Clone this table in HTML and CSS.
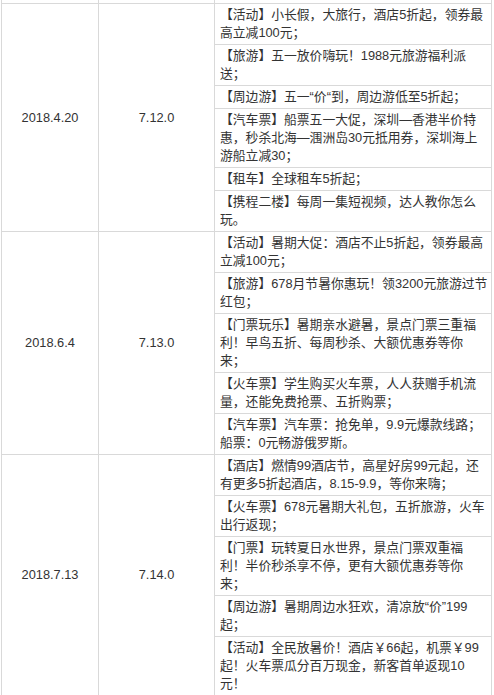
FILE: index.html
```html
<!DOCTYPE html>
<html lang="zh-CN">
<head>
<meta charset="utf-8">
<title>活动列表</title>
<link rel="stylesheet" href="styles.css">
</head>
<body>
<div class="table">
  <div class="group spacer">
    <div class="cell"></div>
    <div class="cell"></div>
    <div class="items"></div>
  </div>

  <div class="group">
    <div class="cell">2018.4.20</div>
    <div class="cell">7.12.0</div>
    <div class="items">
      <div class="item">【活动】小长假，大旅行，酒店5折起，领券最高立减100元；</div>
      <div class="item">【旅游】五一放价嗨玩！1988元旅游福利派送；</div>
      <div class="item">【周边游】五一“价“到，周边游低至5折起；</div>
      <div class="item">【汽车票】船票五一大促，深圳—香港半价特惠，秒杀北海—涠洲岛30元抵用券，深圳海上游船立减30；</div>
      <div class="item">【租车】全球租车5折起；</div>
      <div class="item">【携程二楼】每周一集短视频，达人教你怎么玩。</div>
    </div>
  </div>

  <div class="group">
    <div class="cell">2018.6.4</div>
    <div class="cell">7.13.0</div>
    <div class="items">
      <div class="item">【活动】暑期大促：酒店不止5折起，领券最高立减100元；</div>
      <div class="item">【旅游】678月节暑你惠玩！领3200元旅游过节红包；</div>
      <div class="item">【门票玩乐】暑期亲水避暑，景点门票三重福利！早鸟五折、每周秒杀、大额优惠券等你来；</div>
      <div class="item">【火车票】学生购买火车票，人人获赠手机流量，还能免费抢票、五折购票；</div>
      <div class="item">【汽车票】汽车票：抢免单，9.9元爆款线路；船票：0元畅游俄罗斯。</div>
    </div>
  </div>

  <div class="group">
    <div class="cell">2018.7.13</div>
    <div class="cell">7.14.0</div>
    <div class="items">
      <div class="item">【酒店】燃情99酒店节，高星好房99元起，还有更多5折起酒店，8.15-9.9，等你来嗨；</div>
      <div class="item">【火车票】678元暑期大礼包，五折旅游，火车出行返现；</div>
      <div class="item">【门票】玩转夏日水世界，景点门票双重福利！半价秒杀享不停，更有大额优惠券等你来；</div>
      <div class="item">【周边游】暑期周边水狂欢，清凉放“价”199起；</div>
      <div class="item">【活动】全民放暑价！酒店￥66起，机票￥99起！火车票瓜分百万现金，新客首单返现10元！</div>
    </div>
  </div>
</div>
</body>
</html>
```

FILE: styles.css
```css
html, body {
  margin: 0;
  padding: 0;
  background: #ffffff;
}

body {
  font-family: "Liberation Sans", "Noto Sans CJK SC", sans-serif;
  font-size: 12.8px;
  line-height: 18px;
  color: #333333;
}

.table {
  width: 491px;
  margin-left: 1px;
  box-sizing: border-box;
  border-left: 1px solid #d9d9d9;
  border-right: 1px solid #d9d9d9;
}

.group {
  display: grid;
  grid-template-columns: 97px 116px 276px;
  border-top: 1px solid #d9d9d9;
}

.group.spacer {
  height: 3px;
  border-top: none;
}

.cell {
  display: flex;
  align-items: center;
  justify-content: center;
  border-right: 1px solid #d9d9d9;
}

.items {
  display: flex;
  flex-direction: column;
}

.item {
  padding: 2px 3px 2px 5px;
  border-top: 1px solid #d9d9d9;
  line-break: strict;
}

.item:first-child {
  border-top: none;
}
```
